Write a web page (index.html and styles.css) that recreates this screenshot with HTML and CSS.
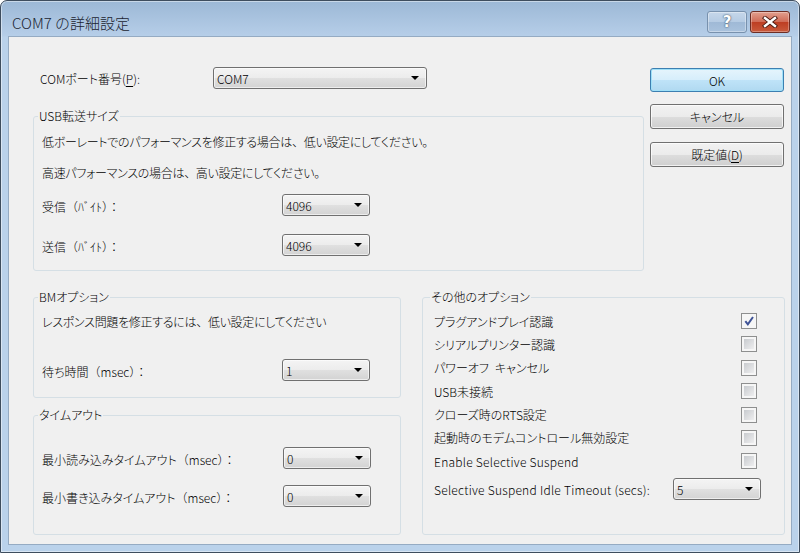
FILE: index.html
```html
<!DOCTYPE html>
<html lang="ja">
<head>
    <meta charset="UTF-8">
    <meta name="viewport" content="width=device-width, initial-scale=1.0">
    <title>COM7 の詳細設定</title>
    <link rel="stylesheet" href="styles.css">
</head>
<body>
    <div class="window">
        <div class="titlebar">
            <span class="title">COM7 の詳細設定</span>
            <div class="caption">
                <button class="cap help">?</button>
                <button class="cap close">
                    <svg width="16" height="12" viewBox="0 0 16 12">
                        <path d="M3 2 L13 10 M13 2 L3 10" stroke="#4a1a12" stroke-width="4.2" stroke-linecap="square"/>
                        <path d="M3 2 L13 10 M13 2 L3 10" stroke="#fff" stroke-width="2.4" stroke-linecap="square"/>
                    </svg>
                </button>
            </div>
        </div>

        <div class="client">
            <div class="top">
                <div class="left">
                    <div class="com-row">
                        <span class="com-label">COMポート番号(<u>P</u>):</span>
                        <div class="combo wide"><span>COM7</span></div>
                    </div>

                    <fieldset class="group usb">
                        <legend>USB転送サイズ</legend>
                        <p class="note">低ボーレートでのパフォーマンスを修正する場合は<span class="fw">、</span>低い設定にしてください<span class="fw">。</span></p>
                        <p class="note second">高速パフォーマンスの場合は<span class="fw">、</span>高い設定にしてください<span class="fw">。</span></p>
                        <div class="field-row first-row">
                            <span class="lbl">受信<span class="fw">（</span>ﾊﾞｲﾄ<span class="fw">）：</span></span>
                            <div class="combo"><span>4096</span></div>
                        </div>
                        <div class="field-row next-row">
                            <span class="lbl">送信<span class="fw">（</span>ﾊﾞｲﾄ<span class="fw">）：</span></span>
                            <div class="combo"><span>4096</span></div>
                        </div>
                    </fieldset>
                </div>

                <div class="buttons">
                    <button class="btn default">OK</button>
                    <button class="btn">キャンセル</button>
                    <button class="btn">既定値(<u>D</u>)</button>
                </div>
            </div>

            <div class="bottom">
                <div class="left-col">
                    <fieldset class="group bm">
                        <legend>BMオプション</legend>
                        <p class="note">レスポンス問題を修正するには<span class="fw">、</span>低い設定にしてください</p>
                        <div class="field-row wait-row">
                            <span class="lbl">待ち時間<span class="fw">（</span>msec<span class="fw">）：</span></span>
                            <div class="combo"><span>1</span></div>
                        </div>
                    </fieldset>

                    <fieldset class="group timeout">
                        <legend>タイムアウト</legend>
                        <div class="field-row">
                            <span class="lbl">最小読み込みタイムアウト<span class="fw">（</span>msec<span class="fw">）：</span></span>
                            <div class="combo"><span>0</span></div>
                        </div>
                        <div class="field-row next-row2">
                            <span class="lbl">最小書き込みタイムアウト<span class="fw">（</span>msec<span class="fw">）：</span></span>
                            <div class="combo"><span>0</span></div>
                        </div>
                    </fieldset>
                </div>

                <fieldset class="group other">
                    <legend>その他のオプション</legend>
                    <div class="opts">
                        <div class="opt">
                            <span class="opt-label">プラグアンドプレイ認識</span>
                            <span class="check">
                                <svg width="12" height="12" viewBox="0 0 12 12">
                                    <path d="M1.6 6.2 L4.6 10 L10.8 1.2" fill="none" stroke="#3f5396" stroke-width="2.4"/>
                                </svg>
                            </span>
                        </div>
                        <div class="opt">
                            <span class="opt-label">シリアルプリンター認識</span>
                            <span class="check"><i></i></span>
                        </div>
                        <div class="opt">
                            <span class="opt-label">パワーオフ&ensp;キャンセル</span>
                            <span class="check"><i></i></span>
                        </div>
                        <div class="opt">
                            <span class="opt-label">USB未接続</span>
                            <span class="check"><i></i></span>
                        </div>
                        <div class="opt">
                            <span class="opt-label">クローズ時のRTS設定</span>
                            <span class="check"><i></i></span>
                        </div>
                        <div class="opt">
                            <span class="opt-label">起動時のモデムコントロール無効設定</span>
                            <span class="check"><i></i></span>
                        </div>
                        <div class="opt">
                            <span class="opt-label latin">Enable Selective Suspend</span>
                            <span class="check"><i></i></span>
                        </div>
                    </div>
                    <div class="idle-row">
                        <span class="idle-label latin">Selective Suspend Idle Timeout (secs):</span>
                        <div class="combo"><span>5</span></div>
                    </div>
                </fieldset>
            </div>
        </div>
    </div>
</body>
</html>
```

FILE: styles.css
```css
* {
    box-sizing: border-box;
}

body {
    margin: 0;
    background: #fff;
    font-family: "Noto Sans CJK JP", "Noto Sans", sans-serif;
    font-size: 12px;
    font-weight: 300;
    color: #000;
    font-feature-settings: "palt";
}

u {
    text-decoration-thickness: 1px;
    text-underline-offset: 2px;
}

.fw {
    font-feature-settings: normal;
}

.latin {
    letter-spacing: 0.25px;
}

/* window frame */
.window {
    width: 800px;
    height: 553px;
    border: 1px solid #3e4d5e;
    border-radius: 7px 7px 0 0;
    background: linear-gradient(#9cb8d6 0, #b6cee8 35px, #bad2eb 36px, #bad2eb 100%);
    padding: 0 7px 7px;
    display: flex;
    flex-direction: column;
    box-shadow: inset 0 0 0 1px rgba(255, 255, 255, 0.45);
}

.titlebar {
    height: 35px;
    display: flex;
    justify-content: space-between;
    align-items: flex-start;
}

.title {
    font-size: 15px;
    line-height: 20px;
    margin: 12px 0 0 4px;
    color: #1b2431;
    font-feature-settings: normal;
}

.caption {
    display: flex;
    gap: 3px;
    margin: 10px 2px 0 0;
}

.cap {
    width: 40px;
    height: 22px;
    border-radius: 3px;
    padding: 0;
    display: flex;
    align-items: center;
    justify-content: center;
}

.help {
    border: 1px solid #7891ad;
    background: linear-gradient(#c6d7ea, #b5cbe3 50%, #9fb9d6 50%, #a9c2dd);
    color: #fff;
    font-family: "DejaVu Sans", sans-serif;
    font-weight: bold;
    font-size: 15px;
    text-shadow: 0 0 2px #44566c, 0 0 1px #44566c;
    box-shadow: inset 0 0 0 1px rgba(255, 255, 255, 0.35);
}

.close {
    border: 1px solid #6d2d24;
    background: linear-gradient(#e2a08f, #cf6a55 50%, #bd3d22 50%, #c95a3c);
    box-shadow: inset 0 0 0 1px rgba(255, 255, 255, 0.3);
}

/* client area */
.client {
    flex: 1;
    background: #f0f0f0;
    border: 1px solid #95abc3;
    padding: 0 6px 0 24px;
}

.top {
    display: flex;
    gap: 6px;
}

.left {
    width: 611px;
}

.com-row {
    display: flex;
    align-items: center;
    height: 22px;
    margin-top: 30px;
    padding-left: 7px;
}

.com-label {
    width: 173px;
}

.combo {
    width: 88px;
    height: 22px;
    border: 1px solid #707070;
    border-radius: 3px;
    background: linear-gradient(#f4f4f4, #ececec 50%, #e0e0e0 51%, #d3d3d3);
    display: flex;
    align-items: center;
    justify-content: space-between;
    padding: 0 7px 0 3px;
    box-shadow: inset 0 0 0 1px rgba(255, 255, 255, 0.6);
}

.combo::after {
    content: "";
    border-left: 4px solid transparent;
    border-right: 4px solid transparent;
    border-top: 4px solid #000;
}

.combo.wide {
    width: 214px;
}

/* group boxes */
.group {
    margin: 0;
    border: 1px solid #d5dfe5;
    border-radius: 3px;
    padding: 0 8px;
    min-width: 0;
}

.group legend {
    padding: 0 1px;
    margin-left: -4px;
    line-height: 16px;
}

.note {
    margin: 0;
    line-height: 16px;
    letter-spacing: -0.3px;
}

.usb {
    margin-top: 19px;
    padding-top: 10px;
    padding-bottom: 14px;
}

.note.second {
    margin-top: 15px;
}

.field-row {
    display: flex;
    align-items: center;
    height: 22px;
}

.field-row .lbl {
    width: 240px;
    padding-top: 2px;
}

.first-row {
    margin-top: 13px;
}

.next-row {
    margin-top: 18px;
}

.buttons {
    width: 134px;
    display: flex;
    flex-direction: column;
    padding-top: 31px;
}

.btn {
    height: 24px;
    border: 1px solid #707070;
    border-radius: 3px;
    background: linear-gradient(#f2f2f2, #ebebeb 50%, #dddddd 51%, #cfcfcf);
    font: inherit;
    color: #000;
    padding: 0;
    box-shadow: inset 0 0 0 1px rgba(255, 255, 255, 0.7);
}

.btn + .btn {
    height: 25px;
    margin-top: 12px;
}

.btn + .btn + .btn {
    margin-top: 13px;
}

.btn.default {
    border-color: #3c7fb1;
    background: linear-gradient(#e5f4fc, #d6eefb 50%, #bfe3f8 51%, #b0d9f1);
    box-shadow: inset 0 0 0 1px #9fe0f8;
}

.bottom {
    display: flex;
    gap: 21px;
    margin-top: 18px;
}

.left-col {
    width: 368px;
    display: flex;
    flex-direction: column;
}

.bm {
    padding-top: 9px;
    padding-bottom: 16px;
}

.wait-row {
    margin-top: 29px;
}

.timeout {
    margin-top: 9px;
    padding-top: 24px;
    padding-bottom: 27px;
}

.timeout .field-row .lbl {
    width: 241px;
}

.next-row2 {
    margin-top: 16px;
}

.other {
    width: 363px;
    padding: 8px 11px 0;
}

.opts {
    display: flex;
    flex-direction: column;
    gap: 7.4px;
}

.opt {
    display: flex;
    align-items: center;
    height: 16px;
}

.opt-label {
    width: 307px;
}

.check {
    width: 16px;
    height: 16px;
    border: 1px solid #8e8f8f;
    background: #f6f6f6;
    padding: 2px;
    display: flex;
    align-items: center;
    justify-content: center;
}

.check i {
    width: 100%;
    height: 100%;
    background: linear-gradient(135deg, #c8cbcf, #eeeeef);
}

.idle-row {
    display: flex;
    align-items: center;
    height: 22px;
    margin-top: 9px;
}

.idle-label {
    width: 239px;
}
```
